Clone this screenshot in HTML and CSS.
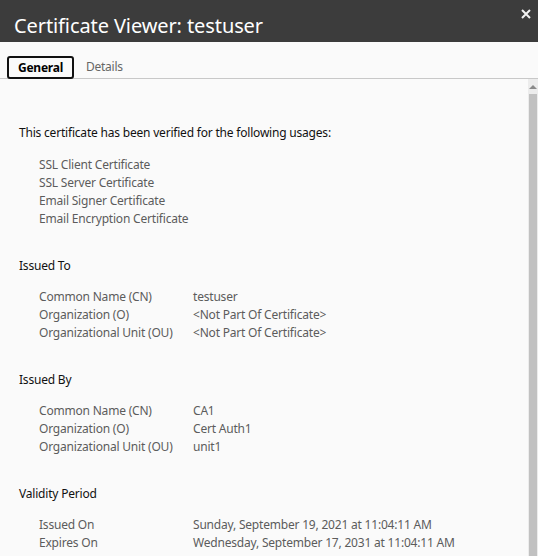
FILE: index.html
```html
<!DOCTYPE html>
<html>
<head>
<meta charset="utf-8">
<link rel="stylesheet" href="styles.css">
</head>
<body>
<div class="dialog">
  <header class="titlebar">
    <h1 class="title">Certificate Viewer: testuser</h1>
    <svg class="close" width="10" height="10" viewBox="0 0 10 10"><path d="M1 1L9 9M9 1L1 9" stroke="#f2f2f2" stroke-width="2"/></svg>
  </header>
  <nav class="tabs">
    <span class="tab active">General</span>
    <span class="tab">Details</span>
  </nav>
  <div class="body">
    <main class="content">
      <p class="intro">This certificate has been verified for the following usages:</p>
      <ul class="usages">
        <li>SSL Client Certificate</li>
        <li>SSL Server Certificate</li>
        <li>Email Signer Certificate</li>
        <li>Email Encryption Certificate</li>
      </ul>

      <h2 class="section">Issued To</h2>
      <div class="grid">
        <span>Common Name (CN)</span><span>testuser</span>
        <span>Organization (O)</span><span>&lt;Not Part Of Certificate&gt;</span>
        <span>Organizational Unit (OU)</span><span>&lt;Not Part Of Certificate&gt;</span>
      </div>

      <h2 class="section">Issued By</h2>
      <div class="grid">
        <span>Common Name (CN)</span><span>CA1</span>
        <span>Organization (O)</span><span>Cert Auth1</span>
        <span>Organizational Unit (OU)</span><span>unit1</span>
      </div>

      <h2 class="section">Validity Period</h2>
      <div class="grid">
        <span>Issued On</span><span>Sunday, September 19, 2021 at 11:04:11 AM</span>
        <span>Expires On</span><span>Wednesday, September 17, 2031 at 11:04:11 AM</span>
      </div>
    </main>
    <div class="scrollbar">
      <span class="arrow"></span>
      <span class="thumb"></span>
    </div>
  </div>
</div>
</body>
</html>
```
FILE: styles.css
```css
html, body {
  margin: 0;
  padding: 0;
  height: 100%;
  overflow: hidden;
  background: #fafafa;
  font-family: "Noto Sans", "Open Sans", sans-serif;
}
.dialog {
  display: flex;
  flex-direction: column;
  height: 556px;
}
.titlebar {
  height: 42px;
  background: #3c3c3c;
  display: flex;
  justify-content: space-between;
  align-items: flex-start;
  flex-shrink: 0;
}
.title {
  margin: 0;
  padding: 12px 0 0 14px;
  font-size: 20px;
  font-weight: normal;
  color: #ffffff;
  line-height: 28px;
  letter-spacing: -0.1px;
}
.close {
  margin: 9px 7px 0 0;
}
.tabs {
  display: flex;
  align-items: center;
  gap: 12px;
  padding: 13px 0 0 7px;
  height: 23px;
  border-bottom: 1px solid #c8c8c8;
  flex-shrink: 0;
  letter-spacing: -0.25px;
}
.tab {
  font-size: 12px;
  color: #666;
  line-height: 19px;
}
.tab.active {
  border: 2px solid #111;
  border-radius: 3px;
  padding: 0 9px;
  color: #000;
  font-weight: bold;
  margin-bottom: -1px;
}
.body {
  flex: 1;
  display: flex;
  min-height: 0;
}
.content {
  flex: 1;
  padding: 45px 0 0 19px;
  font-size: 12px;
  line-height: 18px;
  color: #5c5c5c;
  letter-spacing: -0.2px;
}
.intro {
  margin: 0 0 14px;
  color: #111;
}
.usages {
  list-style: none;
  margin: 0 0 29px;
  padding: 0 0 0 20px;
}
.section {
  margin: 0 0 13px;
  font-size: 12px;
  font-weight: normal;
  color: #111;
  line-height: 18px;
}
.grid {
  display: grid;
  grid-template-columns: 154px 1fr;
  padding-left: 20px;
  margin-bottom: 29px;
}
.scrollbar {
  width: 10px;
  background: #ececec;
  display: flex;
  flex-direction: column;
  align-items: center;
}
.arrow {
  margin-top: 6px;
  width: 0;
  height: 0;
  border-left: 4px solid transparent;
  border-right: 4px solid transparent;
  border-bottom: 4px solid #8a8a8a;
}
.thumb {
  margin-top: 5px;
  width: 8px;
  flex: 1;
  background: #c1c1c1;
}
```
